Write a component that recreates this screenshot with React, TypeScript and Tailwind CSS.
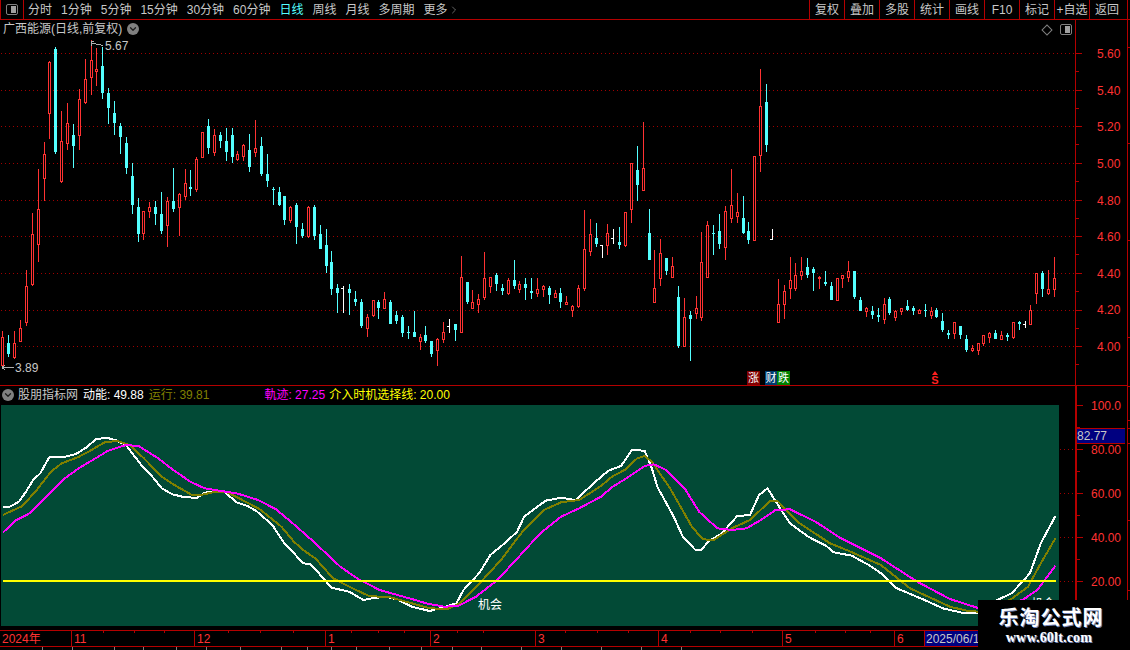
import { ChevronDown, ChevronRight } from "lucide-react";

type Candle = [number, number, number, number, number, "r" | "c" | "w"];

// x, high, body top, body bottom, low (all in page pixels)
const candles: Candle[] = [
  [2,331,337,366,367,"r"],[8,335,343,354,357,"c"],[14,331,343,358,359,"r"],[20,320,328,342,342,"r"],
  [26,270,286,323,326,"r"],[32,213,234,285,286,"r"],[38,169,209,245,262,"r"],[44,142,154,179,201,"r"],
  [49,61,62,114,139,"r"],[55,47,49,152,154,"c"],[61,111,141,182,183,"r"],[67,103,123,144,150,"r"],
  [73,124,135,146,168,"c"],[79,89,99,136,150,"r"],[85,59,79,103,104,"r"],[91,40,60,78,95,"r"],
  [96,48,69,72,86,"r"],[102,47,66,93,99,"c"],[108,88,93,108,124,"c"],[114,101,113,123,135,"c"],
  [120,123,126,137,154,"c"],[126,137,143,168,174,"c"],[132,163,176,205,214,"c"],[138,198,207,234,242,"c"],
  [143,211,211,234,240,"r"],[149,202,207,212,218,"r"],[155,201,207,214,225,"c"],[161,192,214,231,234,"c"],
  [167,197,201,226,247,"r"],[173,168,201,209,212,"c"],[179,193,194,208,236,"r"],[185,169,183,197,200,"r"],
  [190,170,187,189,196,"c"],[196,157,159,190,192,"r"],[202,132,132,158,158,"r"],[208,119,126,148,154,"c"],
  [214,129,135,153,156,"r"],[220,132,135,141,148,"c"],[226,128,141,152,161,"c"],[232,128,135,157,163,"c"],
  [237,151,154,160,161,"r"],[243,144,145,157,161,"r"],[249,134,150,167,172,"c"],[255,120,148,153,157,"r"],
  [261,137,146,174,176,"c"],[267,154,174,181,187,"c"],[273,187,189,190,205,"c"],[279,187,192,205,206,"c"],
  [284,196,196,220,225,"c"],[290,206,207,221,223,"r"],[296,203,205,227,244,"c"],[302,223,229,236,238,"c"],
  [308,206,207,237,238,"r"],[314,205,207,236,240,"c"],[320,225,234,249,249,"c"],[326,229,245,266,273,"c"],
  [331,251,262,289,295,"c"],[337,284,288,293,313,"c"],[343,286,288,288,313,"w"],[349,284,289,293,315,"c"],
  [355,291,299,302,306,"c"],[361,299,302,326,328,"c"],[367,314,317,329,337,"r"],[373,300,300,316,317,"r"],
  [378,300,302,308,319,"c"],[384,292,299,309,309,"r"],[390,300,302,324,324,"c"],[396,311,315,321,324,"c"],
  [402,315,317,333,337,"c"],[408,326,332,333,339,"c"],[414,311,332,337,337,"c"],[420,334,337,342,350,"r"],
  [425,326,335,341,343,"c"],[431,341,341,354,357,"c"],[437,338,339,351,366,"r"],[443,322,332,340,343,"r"],
  [449,319,326,326,333,"w"],[455,324,324,330,341,"c"],[461,256,277,333,333,"r"],[467,282,282,302,304,"c"],
  [472,290,302,309,309,"r"],[478,294,299,305,313,"r"],[484,252,278,298,300,"r"],[490,277,277,287,293,"r"],
  [496,273,275,284,291,"c"],[502,284,288,291,295,"c"],[508,278,280,294,295,"r"],[514,260,280,286,289,"c"],
  [519,281,284,290,293,"r"],[525,278,284,288,300,"c"],[531,278,291,293,299,"c"],[537,278,289,294,297,"r"],
  [543,285,286,290,297,"r"],[549,286,288,295,304,"c"],[555,290,293,298,298,"r"],[560,288,293,302,308,"c"],
  [566,296,302,305,305,"r"],[572,305,306,311,317,"r"],[578,285,288,307,308,"r"],[584,210,249,289,291,"r"],
  [590,219,234,252,256,"r"],[596,223,238,244,247,"c"],[602,245,245,245,258,"w"],[607,224,233,246,255,"r"],
  [613,229,238,238,244,"w"],[619,227,242,245,249,"c"],[625,212,212,246,247,"r"],[631,163,163,210,223,"r"],
  [637,146,170,185,201,"c"],[643,122,168,191,191,"r"],[649,209,233,260,260,"c"],[654,250,288,303,303,"r"],
  [660,239,253,279,286,"r"],[666,258,258,271,275,"c"],[672,257,266,278,278,"r"],[678,286,297,346,348,"c"],
  [684,298,317,347,347,"r"],[690,311,315,319,361,"c"],[696,296,308,314,319,"r"],[701,232,262,318,321,"r"],
  [707,221,225,278,278,"r"],[713,225,233,234,255,"c"],[719,214,231,244,249,"c"],[725,206,211,248,260,"r"],
  [731,169,205,219,223,"r"],[737,193,212,217,223,"r"],[743,196,218,233,234,"c"],[748,222,231,240,244,"c"],
  [754,156,156,241,241,"r"],[760,69,106,156,172,"r"],[766,84,102,145,152,"c"],[772,229,239,239,239,"w"],
  [778,279,304,323,323,"r"],[784,285,291,305,319,"r"],[790,257,280,289,299,"r"],[795,263,275,289,291,"r"],
  [801,257,271,276,280,"r"],[807,258,267,275,278,"c"],[813,267,269,273,291,"c"],[819,276,277,279,289,"r"],
  [825,271,282,284,286,"c"],[831,282,286,300,300,"c"],[837,278,278,301,301,"r"],[842,275,275,279,288,"r"],
  [848,261,271,278,282,"r"],[854,271,271,297,299,"c"],[860,297,300,311,311,"c"],[866,307,308,312,317,"r"],
  [872,306,311,315,319,"c"],[878,308,315,317,322,"c"],[884,298,304,320,324,"r"],[889,297,299,313,315,"c"],
  [895,310,311,318,321,"r"],[901,308,308,312,315,"r"],[907,300,306,310,311,"c"],[913,306,308,311,315,"c"],
  [919,309,310,314,314,"r"],[925,304,310,311,317,"c"],[931,307,311,316,319,"r"],[936,308,310,317,318,"c"],
  [942,313,321,330,332,"c"],[948,330,333,335,339,"c"],[954,322,322,334,339,"r"],[960,326,326,335,339,"c"],
  [966,335,339,350,352,"c"],[972,345,348,351,352,"r"],[978,343,343,351,355,"r"],[983,335,335,344,346,"r"],
  [989,332,333,338,343,"r"],[995,330,333,339,339,"c"],[1001,331,335,340,340,"r"],[1007,333,335,337,341,"c"],
  [1013,322,322,338,339,"r"],[1019,321,322,324,330,"c"],[1025,321,324,324,328,"w"],[1030,305,310,325,325,"r"],
  [1036,273,273,294,304,"r"],[1042,271,273,289,297,"c"],[1048,270,289,294,295,"r"],[1054,257,278,290,297,"r"],
];

const gridYs = [53.5, 90.5, 126.5, 163.5, 200.5, 236.5, 273.5, 310.5, 346.5];
const prices = ["5.60", "5.40", "5.20", "5.00", "4.80", "4.60", "4.40", "4.20", "4.00"];

// points of the indicator lines, x and y in page pixels
const pts = (a: number[], sx: number, ox: number) => {
  const out: string[] = [];
  for (let i = 0; i < a.length; i += 2) out.push(`${(ox + a[i] * sx).toFixed(1)},${(a[i + 1] / 3).toFixed(1)}`);
  return out;
};
const whiteA = [5,321,25,320,50,305,70,275,90,240,110,220,135,172,180,170,210,162,240,142,265,118,295,113,320,120,350,135,375,170,395,198,420,225,450,265,480,283,515,292,550,293,570,278,600,273,625,275,660,307,690,318,715,333,760,375,795,433,825,465,845,490,865,492,890,520,925,563,975,575,1015,600,1040,595,1075,590,1110,598,1150,620,1200,633,1240,622,1275,610,1295,570,1340,518,1370,465,1410,430,1445,395,1465,350,1525,302,1568,293];
const whiteB = [40,300,70,270,100,240,130,212,165,198,195,150,230,152,250,205,265,260,310,350,335,410,370,450,385,450,410,420,440,403,485,348,520,345,545,285,568,265,600,320,630,370,680,410,730,438,750,457,800,467,850,497,880,520,920,563,1000,600,1050,625,1110,640,1150,640,1200,600,1240,580,1290,520,1320,430,1360,348];
const oliveA = [5,345,60,318,100,270,140,215,170,190,215,172,250,152,290,127,325,123,360,135,400,175,450,230,490,258,535,285,560,285,600,275,630,275,670,297,725,328,785,380,820,425,850,453,880,475,930,535,975,560,1030,588,1090,592,1150,610,1200,625,1250,627,1285,610,1340,550,1400,480,1460,395,1520,330,1568,307];
const oliveB = [50,300,110,258,140,230,175,210,210,175,230,168,250,185,300,265,360,380,390,418,420,420,470,385,520,360,575,303,595,302,650,365,740,430,790,452,880,495,960,565,1070,620,1120,633,1150,635,1235,600,1285,560,1320,490,1360,415];
const magentaA = [5,398,40,362,80,340,125,292,175,238,220,203,260,178,300,152,350,135,385,138,440,175,480,208,530,245,570,265,610,272,660,280,720,300,770,328,820,373,870,420,910,460,950,500,1000,537,1060,570,1110,585,1150,597,1190,610,1240,620,1280,618,1330,590,1390,540,1450,470,1510,400,1568,350];
const magentaB = [50,325,110,290,140,262,180,235,230,198,255,193,290,210,340,265,380,335,430,385,470,390,510,385,550,360,590,330,630,328,700,365,770,415,880,475,980,545,1070,597,1150,625,1270,600,1310,570,1360,497];

const line = (a: number[], b: number[]) =>
  [...pts(a, 1 / 2.8, 0), ...pts(b, 0.3635, 560)].join(" ");

const navItems = ["分时", "1分钟", "5分钟", "15分钟", "30分钟", "60分钟", "日线", "周线", "月线", "多周期"];
const rightBtns = ["复权", "叠加", "多股", "统计", "画线", "F10", "标记", "+自选", "返回"];

const timeCells = [
  { t: "2024年", w: "w-[72px]" },
  { t: "11", w: "w-[123px]" },
  { t: "12", w: "w-[131px]" },
  { t: "1", w: "w-[105px]" },
  { t: "2", w: "w-[105px]" },
  { t: "3", w: "w-[123px]" },
  { t: "4", w: "w-[124px]" },
  { t: "5", w: "w-[112px]" },
  { t: "6", w: "w-[30px]" },
];
const timeTicks = [103, 134, 164, 228, 260, 293, 351, 378, 404, 457, 483, 565, 597, 628, 690, 720, 752, 815, 845, 870];
const tabEdges = [43, 30, 42, 29, 33, 30, 34, 41, 26, 24, 25, 33, 32, 31, 29, 40, 40, 40, 40, 40];
const railTicks = [19, 47, 143, 240, 337, 386, 420, 428, 443, 520, 590];

function ToggleIcon() {
  return (
    <div className="w-[12px] h-[11px] border border-[#808080] rounded-[2px] flex justify-end p-px">
      <div className="w-[5px] bg-[#a0a0a0]" />
    </div>
  );
}

function RoundChevron() {
  return (
    <span className="w-3 h-3 rounded-full bg-[#808080] flex items-center justify-center">
      <ChevronDown size={10} strokeWidth={3} color="#1c1c1c" />
    </span>
  );
}

function CandleMark({ c }: { c: Candle }) {
  const [x, hi, top, bot, lo, kind] = c;
  const color = kind === "r" ? "#ff3232" : kind === "c" ? "#54ffff" : "#ffffff";
  if (kind === "w") {
    return (
      <g fill={color}>
        <rect x={x} y={hi} width={1} height={lo - hi} />
        <rect x={x - 2} y={top} width={3} height={1} />
      </g>
    );
  }
  return (
    <g>
      <rect x={x} y={hi} width={1} height={lo - hi} fill={color} />
      {kind === "r" ? (
        <rect x={x - 0.5} y={top + 0.5} width={2} height={bot - top - 1} fill="#000" stroke={color} />
      ) : (
        <rect x={x - 1} y={top} width={3} height={Math.max(bot - top, 1)} fill={color} />
      )}
    </g>
  );
}

export default function App() {
  return (
    <div className="relative flex w-[1130px] h-[650px] bg-black overflow-hidden text-xs text-[#c8c8c8] font-['Liberation_Sans','Noto_Sans_CJK_SC',sans-serif]">
      <div className="flex flex-col w-[1127px]">
        {/* toolbar */}
        <div className="flex items-center h-5 border-b border-[#b40000] shrink-0">
          <div className="flex items-center justify-center w-[24px] h-full border-x border-[#b40000]">
            <ToggleIcon />
          </div>
          <div className="flex items-center gap-[9px] ml-[4px]">
            {navItems.map((n) => (
              <span key={n} className={n === "日线" ? "text-[#54ffff]" : ""}>
                {n}
              </span>
            ))}
            <span className="flex items-center">
              更多
              <ChevronRight size={12} strokeWidth={1} />
            </span>
          </div>
          <div className="flex ml-auto mr-[3px] h-full">
            {rightBtns.map((b) => (
              <div key={b} className="flex items-center justify-center w-[35px] border-l border-[#b40000]">
                {b}
              </div>
            ))}
          </div>
        </div>

        {/* price panel */}
        <div className="flex h-[366px] border-b border-[#b40000] shrink-0">
          <div className="relative w-[1075px]">
            <svg className="absolute left-0 top-0" width={1075} height={365} viewBox="0 20 1075 365" shapeRendering="crispEdges">
              {gridYs.map((y) => (
                <line key={y} x1={1} x2={1075} y1={y} y2={y} stroke="#a00000" strokeDasharray="1 3" />
              ))}
              {candles.map((c) => (
                <CandleMark key={c[0]} c={c} />
              ))}
              <path d="M91.5 41V46M91.5 41H94M92 43.5H95L97 45L100 44.5L103 46" stroke="#b0b0b0" fill="none" />
              <path d="M2 367.5H14M2 367.5L5 365M2 367.5L5 370" stroke="#b0b0b0" fill="none" />
            </svg>
            <div className="relative flex items-center h-[18px] pl-[3px] gap-[5px]">
              <span>广西能源(日线,前复权)</span>
              <RoundChevron />
            </div>
            <span className="absolute left-[105px] top-[19px] leading-[14px]">5.67</span>
            <span className="absolute left-[15px] top-[341px] leading-[14px]">3.89</span>
            <div className="absolute left-[1042px] top-[5px] w-[8px] h-[8px] mt-[1px] ml-px rotate-45 border border-[#808080]" />
            <div className="absolute left-[1060px] top-[4px]">
              <ToggleIcon />
            </div>
            <span className="absolute left-[747px] top-[351px] flex items-center justify-center w-[13px] h-[14px] bg-[#800000] text-white text-[11px] leading-none">涨</span>
            <span className="absolute left-[765px] top-[351px] flex items-center justify-center w-[12px] h-[14px] bg-[#003c6e] text-white text-[11px] leading-none">财</span>
            <span className="absolute left-[777px] top-[351px] flex items-center justify-center w-[13px] h-[14px] bg-[#008000] text-white text-[11px] leading-none">跌</span>
            <span className="absolute left-[931px] top-[351px] flex flex-col items-center w-[8px] text-[#ff2020] text-[11px] font-bold leading-[10px]">
              <span className="w-0 h-0 border-x-[3px] border-x-transparent border-b-[4px] border-b-[#ff2020]" />
              S
            </span>
          </div>
          <div className="relative w-[52px] border-l border-[#b40000] pt-[16px] pl-[21px] text-[#ff3232]">
            <svg className="absolute left-0 top-0" width={8} height={365} shapeRendering="crispEdges">
              {gridYs.map((y) => (
                <g key={y}>
                  <line x1={0} x2={6} y1={y - 20} y2={y - 20} stroke="#b40000" />
                  <line x1={0} x2={3} y1={y - 2} y2={y - 2} stroke="#b40000" />
                </g>
              ))}
            </svg>
            {prices.map((p) => (
              <div key={p} className="flex items-center h-[36.6px]">
                {p}
              </div>
            ))}
          </div>
        </div>

        {/* indicator panel */}
        <div className="flex h-[244px] shrink-0">
          <div className="w-[1075px]">
            <div className="flex items-center h-[19px] pb-[2px] pl-[2px]">
              <RoundChevron />
              <span className="ml-[4px]">股朋指标网</span>
              <span className="ml-[5px] text-white">动能: 49.88</span>
              <span className="ml-[5px] text-[#808000]">运行: 39.81</span>
              <span className="ml-[55px] text-[#ff00ff]">軌迹: 27.25</span>
              <span className="ml-[4px] text-[#ffff00]">介入时机选择线: 20.00</span>
            </div>
            <div className="flex">
              <div className="relative w-[1058px] h-[221px] ml-px bg-[#024a36]">
                <svg className="absolute left-0 top-0" width={1058} height={221} viewBox="0 5 1058 221" shapeRendering="crispEdges" fill="none">
                  <polyline points={line(whiteA, whiteB)} stroke="#ffffff" strokeWidth={2} strokeLinejoin="round" />
                  <polyline points={line(oliveA, oliveB)} stroke="#808000" strokeWidth={2} strokeLinejoin="round" />
                  <polyline points={line(magentaA, magentaB)} stroke="#ff00ff" strokeWidth={2} strokeLinejoin="round" />
                  <line x1={2} x2={1055} y1={181} y2={181} stroke="#ffff00" strokeWidth={2} />
                </svg>
                <span className="absolute left-[477px] top-[192px] text-white leading-[16px]">机会</span>
                <span className="absolute left-[1030px] top-[191px] h-[4px] overflow-hidden text-white leading-[16px]">机会</span>
              </div>
              <svg width={16} height={221} shapeRendering="crispEdges">
                {[44.5, 88.5, 132.5, 176.5].map((y) => (
                  <line key={y} x1={1} x2={16} y1={y} y2={y} stroke="#a00000" strokeDasharray="1 3" />
                ))}
              </svg>
            </div>
          </div>
          <div className="relative w-[52px] border-l-2 border-[#b40000] pt-[13px] pl-[14px] text-[#ff3232]">
            <svg className="absolute left-0 top-0" width={8} height={244} shapeRendering="crispEdges">
              {[19.5, 63.5, 107.5, 151.5, 195.5].map((y) => (
                <g key={y}>
                  <line x1={0} x2={6} y1={y} y2={y} stroke="#b40000" />
                  <line x1={0} x2={3} y1={y + 22} y2={y + 22} stroke="#b40000" />
                </g>
              ))}
            </svg>
            {["100.0", "80.00", "60.00", "40.00", "20.00"].map((v) => (
              <div key={v} className="h-[43.9px] leading-[14px]">
                {v}
              </div>
            ))}
            <div className="absolute left-0 top-[42px] w-[48px] h-[16px] flex items-center bg-[#000080] border-y border-[#b40000] text-[#c8c8c8]">
              82.77
            </div>
          </div>
        </div>

        {/* time axis */}
        <div className="relative flex h-[17px] border-y border-[#b40000] text-[#ff3232] shrink-0">
          {timeCells.map((c) => (
            <div key={c.t} className={`${c.w} border-r border-[#b40000] pl-[2px] leading-[16px] shrink-0`}>
              {c.t}
            </div>
          ))}
          <div className="w-[53px] bg-[#000080] pl-[1px] text-[#c8c8c8] leading-[16px] whitespace-nowrap overflow-hidden">
            2025/06/16
          </div>
          <svg className="absolute left-0 top-0" width={1127} height={3} shapeRendering="crispEdges">
            {timeTicks.map((x) => (
              <line key={x} x1={x + 0.5} x2={x + 0.5} y1={0} y2={2} stroke="#b40000" />
            ))}
          </svg>
        </div>

        {/* tab strip, cut by the window */}
        <div className="flex h-[3px]">
          {tabEdges.map((w, i) => (
            <div key={i} style={{ width: w }} className="border-r border-[#808080] shrink-0" />
          ))}
        </div>
      </div>

      {/* right rail */}
      <div className="relative w-[3px] border-l border-[#b40000]">
        <svg className="absolute left-0 top-0" width={2} height={650} shapeRendering="crispEdges">
          {railTicks.map((y) => (
            <line key={y} x1={0} x2={2} y1={y + 0.5} y2={y + 0.5} stroke="#b40000" />
          ))}
        </svg>
      </div>

      {/* watermark */}
      <div className="absolute right-0 bottom-0 flex flex-col items-center w-[152px] h-[50px] pt-[5px] pr-[6px] bg-black text-white font-bold font-['Noto_Sans_CJK_SC',sans-serif]">
        <span className="text-[20px] leading-[24px] tracking-[1px] [text-shadow:1px_1px_0_#7083b8]">乐淘公式网</span>
        <span className="text-[14px] leading-[14px] mt-[2px] mr-[4px] tracking-[0.2px] font-['Liberation_Serif',serif] [text-shadow:1px_1px_0_#7083b8]">www.60lt.com</span>
      </div>
    </div>
  );
}
